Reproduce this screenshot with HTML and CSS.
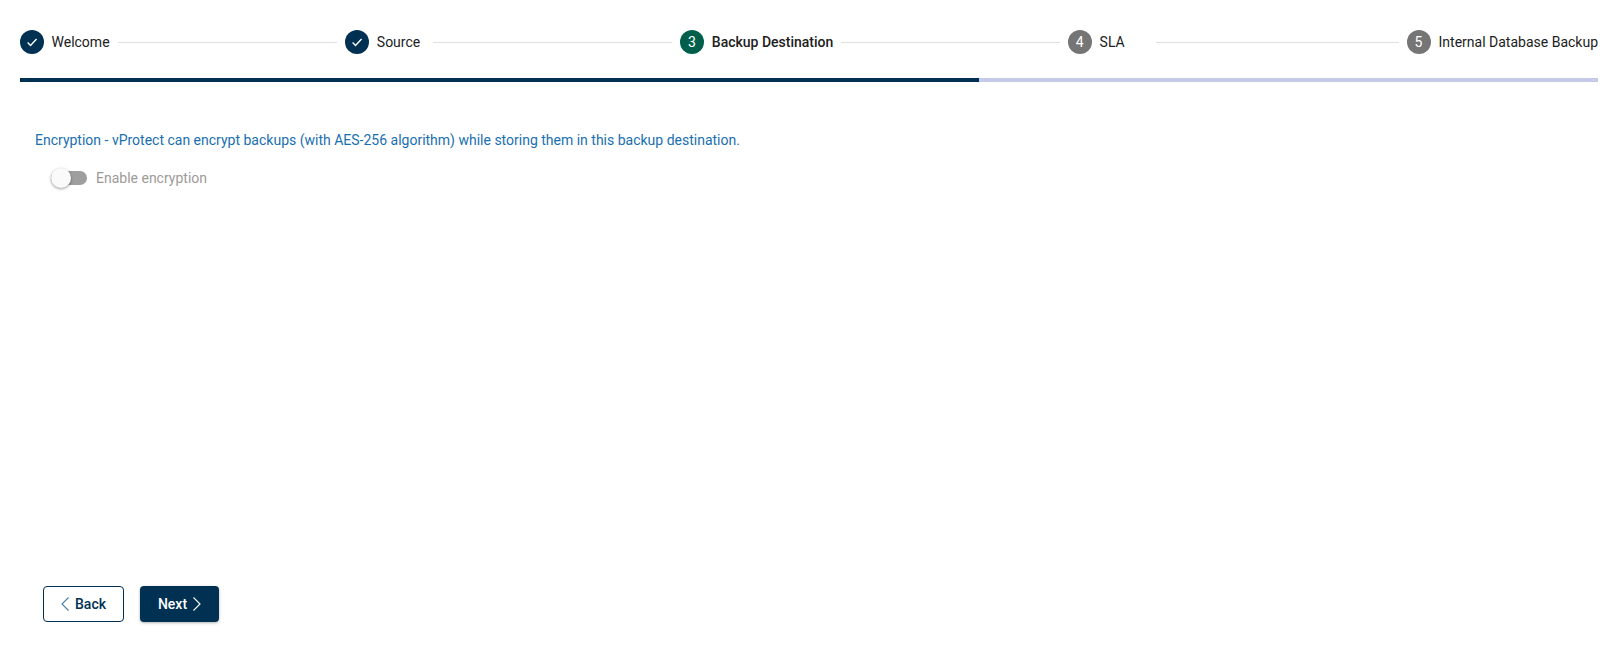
FILE: index.html
```html
<!DOCTYPE html>
<html lang="en">
<head>
    <meta charset="UTF-8">
    <title>Backup Destination</title>
    <link rel="stylesheet" href="styles.css">
</head>
<body>
    <div class="wizard">
        <div class="stepper">
            <div class="step">
                <span class="step-icon done">
                    <svg width="14" height="14" viewBox="0 0 24 24"><path d="M4.5 12.8l5 5L19.8 7" fill="none" stroke="#fff" stroke-width="2.4"/></svg>
                </span>
                <span class="step-label">Welcome</span>
            </div>
            <div class="step-line line-1"></div>
            <div class="step">
                <span class="step-icon done">
                    <svg width="14" height="14" viewBox="0 0 24 24"><path d="M4.5 12.8l5 5L19.8 7" fill="none" stroke="#fff" stroke-width="2.4"/></svg>
                </span>
                <span class="step-label">Source</span>
            </div>
            <div class="step-line line-2"></div>
            <div class="step">
                <span class="step-icon active">3</span>
                <span class="step-label current">Backup Destination</span>
            </div>
            <div class="step-line line-3"></div>
            <div class="step">
                <span class="step-icon">4</span>
                <span class="step-label">SLA</span>
            </div>
            <div class="step-line line-4"></div>
            <div class="step">
                <span class="step-icon">5</span>
                <span class="step-label">Internal Database Backup</span>
            </div>
        </div>

        <div class="progress">
            <div class="progress-fill"></div>
        </div>

        <div class="content">
            <p class="info">Encryption - vProtect can encrypt backups (with AES-256 algorithm) while storing them in this backup destination.</p>
            <label class="toggle">
                <span class="toggle-track"><span class="toggle-thumb"></span></span>
                <span class="toggle-label">Enable encryption</span>
            </label>
        </div>

        <div class="actions">
            <button class="btn btn-outline">
                <svg width="8" height="14" viewBox="0 0 8 14"><path d="M7.5 0.5L1 7l6.5 6.5" fill="none" stroke="#4a7fa5" stroke-width="1.1"/></svg>
                Back
            </button>
            <button class="btn btn-primary">
                Next
                <svg width="8" height="14" viewBox="0 0 8 14"><path d="M0.5 0.5L7 7l-6.5 6.5" fill="none" stroke="#fff" stroke-width="1.1"/></svg>
            </button>
        </div>
    </div>
</body>
</html>
```

FILE: styles.css
```css
* {
    margin: 0;
    padding: 0;
    box-sizing: border-box;
}

body {
    font-family: Roboto, "Liberation Sans", sans-serif;
    font-size: 14px;
    color: #212121;
    background-color: #fff;
}

.wizard {
    display: flex;
    flex-direction: column;
    height: 658px;
    padding: 30px 14px 36px 19.5px;
}

.stepper {
    display: flex;
    align-items: center;
    height: 24px;
}

.step {
    display: flex;
    align-items: center;
    gap: 8px;
}

.step-icon {
    display: flex;
    align-items: center;
    justify-content: center;
    width: 24px;
    height: 24px;
    border-radius: 50%;
    background-color: #757575;
    color: #fff;
}

.step-icon.done {
    background-color: #003153;
}

.step-icon.active {
    background-color: #005f4b;
}

.step-label {
    min-width: 48px;
    white-space: nowrap;
}

.step-label.current {
    font-weight: 500;
}

.step-line {
    height: 1px;
    margin: 0 8px;
    background-color: #e0e0e0;
}

.line-1 { flex: 222 1 0; }
.line-2 { flex: 242 1 0; }
.line-3 { flex: 221 1 0; }
.line-4 { flex: 246 1 0; }

.progress {
    height: 4px;
    margin-top: 24px;
    background-color: #c5cae9;
}

.progress-fill {
    width: 60.8%;
    height: 100%;
    background-color: #003153;
}

.content {
    padding: 48px 0 0 15.5px;
}

.info {
    line-height: 20px;
    color: #1a6fb0;
}

.toggle {
    display: flex;
    align-items: center;
    gap: 9px;
    margin: 18px 0 0 16px;
    color: #9e9a98;
}

.toggle-track {
    position: relative;
    display: block;
    width: 36px;
    height: 14px;
    border-radius: 7px;
    background-color: #9e9e9e;
}

.toggle-thumb {
    position: absolute;
    top: -3px;
    left: 0;
    width: 20px;
    height: 20px;
    border-radius: 50%;
    background-color: #fafafa;
    box-shadow: 0 1px 3px rgba(0,0,0,0.4);
}

.toggle-label {
    line-height: 20px;
}

.actions {
    display: flex;
    gap: 16px;
    margin-top: auto;
    padding-left: 23.5px;
}

.btn {
    display: flex;
    align-items: center;
    justify-content: center;
    gap: 6px;
    height: 36px;
    border-radius: 4px;
    font-family: inherit;
    font-size: 14px;
    font-weight: 500;
    cursor: pointer;
}

.btn-outline {
    width: 81px;
    background-color: #fff;
    color: #003153;
    border: 1px solid #003153;
}

.btn-primary {
    width: 79px;
    background-color: #003153;
    color: #fff;
    border: none;
    box-shadow: 0 1px 3px rgba(0,0,0,0.3);
}
```
